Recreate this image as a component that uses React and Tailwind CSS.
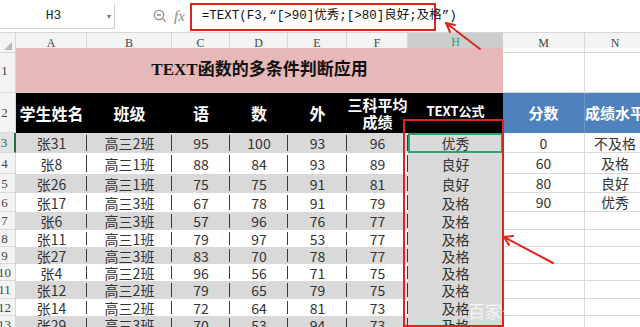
import React from 'react'

const cols = 'grid grid-cols-[16px_71px_85px_58px_58px_59px_61px_95px_82px_60px]'
const cn = '"Noto Sans CJK SC", "Liberation Sans", sans-serif'
const serif = '"Liberation Serif", "Noto Sans CJK SC", serif'

const rows = [
  ['张31', '高三2班', '95', '100', '93', '96', '优秀', '0', '不及格'],
  ['张8', '高三1班', '88', '84', '93', '89', '良好', '60', '及格'],
  ['张26', '高三1班', '75', '75', '91', '81', '良好', '80', '良好'],
  ['张17', '高三3班', '67', '78', '91', '79', '及格', '90', '优秀'],
  ['张6', '高三3班', '57', '96', '76', '77', '及格', '', ''],
  ['张11', '高三1班', '79', '97', '53', '77', '及格', '', ''],
  ['张27', '高三3班', '83', '70', '78', '77', '及格', '', ''],
  ['张4', '高三2班', '96', '56', '71', '75', '及格', '', ''],
  ['张12', '高三2班', '79', '65', '79', '75', '及格', '', ''],
  ['张14', '高三2班', '72', '64', '81', '73', '及格', '', ''],
  ['张29', '高三3班', '70', '53', '94', '73', '及格', '', ''],
]

const heights = ['h-[20px]', 'h-[21px]', 'h-[19px]', 'h-[19px]', 'h-[18px]', 'h-[17px]', 'h-[17px]', 'h-[17px]', 'h-[18px]', 'h-[17px]', 'h-[17px]']

const sep = "relative after:content-[''] after:absolute after:right-0 after:top-[2px] after:bottom-[2px] after:w-px after:bg-[#3a3a3a]"

function RowNum({ n, active }) {
  return (
    <div className={`overflow-hidden flex items-center border-r border-b border-[#d8d8d8] ${active ? 'bg-[#e2e2e2] text-[#217346] border-r-2 border-r-[#217346]' : 'bg-[#f4f4f4] text-[#444]'}`}>
      <span className="w-[22px] -ml-[6px] text-center text-[13px] leading-none" style={{ fontFamily: serif }}>{n}</span>
    </div>
  )
}

export default function App() {
  return (
    <div className="relative w-[640px] h-[327px] overflow-hidden bg-white text-[#333]" style={{ fontFamily: cn }}>
      {/* toolbar */}
      <div className="flex items-center h-[33px] bg-white border-b border-[#d6d6d6]">
        <div className="flex items-center w-[115px] h-[25px] border-r border-b border-[#cfcfcf] bg-white">
          <span className="flex-1 text-center text-[13px] text-[#222]" style={{ fontFamily: '"Liberation Mono", monospace' }}>H3</span>
          <span className="text-[8px] text-[#777] pr-[3px]">▾</span>
        </div>
        <div className="flex items-center gap-[7px] ml-[38px] text-[#888]">
          <svg width="14" height="14" viewBox="0 0 14 14" fill="none" stroke="#888" strokeWidth="1.3">
            <circle cx="6" cy="6" r="4.6" />
            <path d="M4 6h4M9.4 9.4l3.2 3.2" />
          </svg>
          <span className="italic text-[15px] leading-none" style={{ fontFamily: serif }}>fx</span>
        </div>
        <div className="ml-[5px] mt-[1px] flex items-center w-[246px] h-[28px] border-2 border-[#e2231a] pl-[10px] text-[12.5px] text-[#111] whitespace-nowrap" style={{ fontFamily: '"Liberation Mono", "Noto Sans CJK SC", monospace' }}>
          =TEXT(F3,“[&gt;90]优秀;[&gt;80]良好;及格”)
        </div>
      </div>

      {/* column headers */}
      <div className={`${cols} h-[15px] bg-[#f3f3f3] text-[12px] text-[#444]`} style={{ fontFamily: serif }}>
        <div className="relative border-r border-b border-[#d6d6d6]">
          <span className="absolute right-[3px] bottom-[2px] w-0 h-0 border-l-[8px] border-l-transparent border-b-[8px] border-b-[#b8b8b8]" />
        </div>
        {['A', 'B', 'C', 'D', 'E', 'F'].map(c => (
          <div key={c} className="flex items-center justify-center border-r border-b border-[#d6d6d6]">{c}</div>
        ))}
        <div className="flex items-center justify-center bg-[#cbcdce] border-b-2 border-[#3e9a6e] text-[#3e9a6e]">H</div>
        <div className="flex items-center justify-center border-r border-b border-[#d6d6d6]">M</div>
        <div className="flex items-center justify-center border-b border-[#d6d6d6]">N</div>
      </div>

      {/* row 1 */}
      <div className={`${cols} h-[45px]`}>
        <RowNum n="1" />
        <div className="col-span-7 flex items-center justify-center bg-[#e6b8b7] border-b border-[#cfcfcf] text-[17px] font-bold text-[#111]" style={{ fontFamily: serif }}>
          TEXT函数的多条件判断应用
        </div>
        <div className="border-r border-b border-[#dadada]" />
        <div className="border-b border-[#dadada]" />
      </div>

      {/* row 2 */}
      <div className={`${cols} h-[40px]`}>
        <RowNum n="2" />
        {['学生姓名', '班级', '语', '数', '外'].map(t => (
          <div key={t} className="flex items-center justify-center bg-black text-white font-bold text-[16px]">{t}</div>
        ))}
        <div className="flex flex-col items-center justify-center bg-black text-white font-bold text-[15px] leading-[17px]">
          <span>三科平均</span>
          <span>成绩</span>
        </div>
        <div className="flex items-center justify-center bg-black text-white font-bold text-[13px] pb-[4px]">TEXT公式</div>
        <div className="flex items-center justify-center bg-[#4f81bd] text-white font-bold text-[15px] border-r border-[#6f95c8]">分数</div>
        <div className="flex items-center justify-center bg-[#4f81bd] text-white font-bold text-[15px] whitespace-nowrap">成绩水平</div>
      </div>

      {/* data */}
      {rows.map((r, i) => {
        const shade = i % 2 === 0 ? 'bg-[#d9d9d9]' : 'bg-white'
        return (
          <div key={i} className={`${cols} ${heights[i]} text-[14px]`}>
            <RowNum n={String(i + 3)} active={i === 0} />
            {r.slice(0, 6).map((v, j) => (
              <div key={j} className={`${sep} ${shade} flex items-center justify-center leading-none`}>{v}</div>
            ))}
            <div className={`flex items-center justify-center bg-[#d9d9d9] leading-none ${i === 0 ? 'border-2 border-[#2fa36b]' : ''}`}>{r[6]}</div>
            <div className="flex items-center justify-center border-r border-b border-[#dadada] leading-none">{r[7]}</div>
            <div className="flex items-center justify-center border-b border-[#dadada] leading-none whitespace-nowrap">{r[8]}</div>
          </div>
        )
      })}

      {/* annotations */}
      <div className="absolute left-[403px] top-[119px] w-[101px] h-[208px] border-2 border-[#e2231a] pointer-events-none" />
      <svg className="absolute inset-0 pointer-events-none" width="640" height="327" viewBox="0 0 640 327" fill="none" stroke="#e2231a" strokeWidth="2" strokeLinecap="round">
        <path d="M480 49L446 23M446 23l4 9M446 23l9 2" />
        <path d="M553 263L504 237M504 237l5 8M504 237l9-1" />
      </svg>
      <div className="absolute left-[468px] top-[298px] text-[17px] text-white/70 pointer-events-none">百家号</div>
    </div>
  )
}
